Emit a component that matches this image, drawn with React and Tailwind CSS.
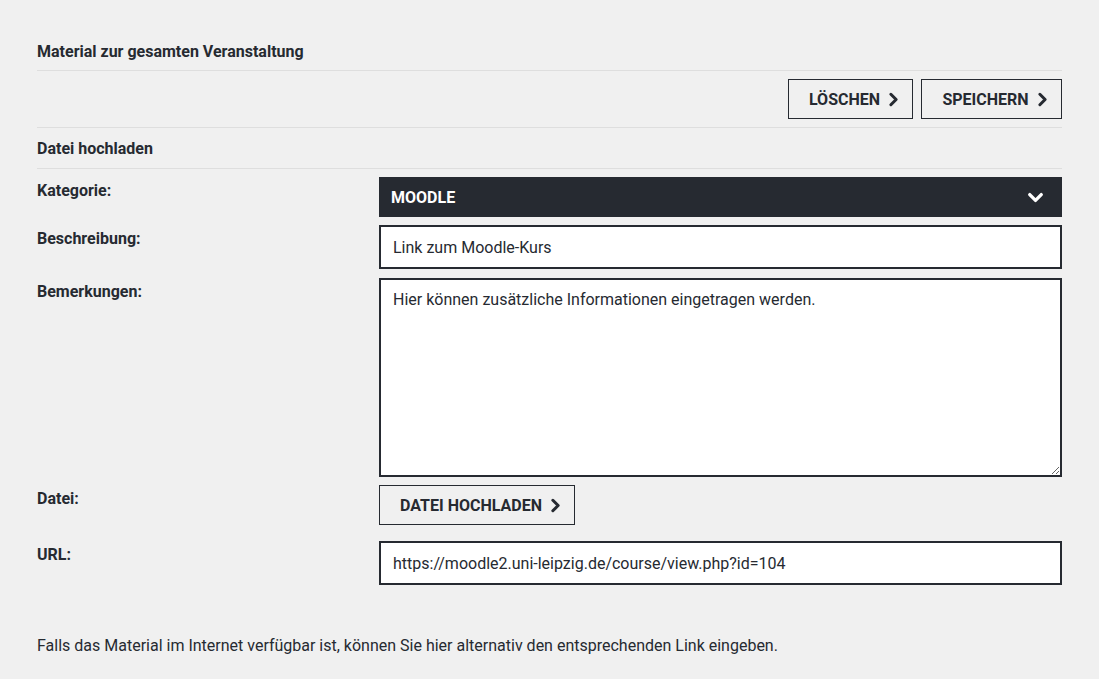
import { ChevronRight, ChevronDown } from 'lucide-react';

function ArrowButton({ children, className = '' }) {
  return (
    <button
      type="button"
      className={`flex h-10 items-center justify-center gap-[3px] border border-[#262a31] bg-transparent pl-3 pt-px text-base font-bold uppercase text-[#262a31] ${className}`}
    >
      {children}
      <ChevronRight size={21} strokeWidth={3.5} />
    </button>
  );
}

function Row({ label, children, className = '' }) {
  return (
    <div className={`grid grid-cols-[342px_1fr] ${className}`}>
      <div className="pt-1 text-base font-bold leading-5 text-[#262a31]">{label}</div>
      <div>{children}</div>
    </div>
  );
}

export default function App() {
  return (
    <div
      className="min-h-screen bg-[#f0f0f0] text-[#262a31]"
      style={{ fontFamily: 'Roboto, "Liberation Sans", sans-serif' }}
    >
      <div className="ml-[37px] w-[1025px] pt-[42px]">
        <h2 className="border-b border-[#dedede] pb-2 text-base font-bold leading-5">
          Material zur gesamten Veranstaltung
        </h2>

        <div className="flex justify-end gap-2 border-b border-[#dedede] py-2">
          <ArrowButton className="w-[125px]">Löschen</ArrowButton>
          <ArrowButton className="w-[141px]">Speichern</ArrowButton>
        </div>

        <h3 className="border-b border-[#dedede] pb-[9px] pt-[11px] text-base font-bold leading-5">
          Datei hochladen
        </h3>

        <div className="flex flex-col gap-2 pt-2">
          <Row label="Kategorie:">
            <div className="flex h-10 items-center justify-between bg-[#262a31] pl-3 pr-[15px] pt-px text-base font-bold uppercase text-white">
              <span>Moodle</span>
              <ChevronDown size={23} strokeWidth={3.5} />
            </div>
          </Row>

          <Row label="Beschreibung:">
            <input
              readOnly
              value="Link zum Moodle-Kurs"
              className="block h-11 w-full border-2 border-[#262a31] bg-white px-3 text-base text-[#262a31] outline-none"
            />
          </Row>

          <Row label="Bemerkungen:" className="mt-px">
            <textarea
              readOnly
              value="Hier können zusätzliche Informationen eingetragen werden."
              className="block h-[199px] w-full resize-y border-2 border-[#262a31] bg-white px-3 py-[10px] text-base leading-5 text-[#262a31] outline-none"
            />
          </Row>

          <Row label="Datei:">
            <ArrowButton className="w-[196px]">Datei hochladen</ArrowButton>
          </Row>

          <Row label="URL:" className="mt-2">
            <input
              readOnly
              value="https://moodle2.uni-leipzig.de/course/view.php?id=104"
              className="block h-11 w-full border-2 border-[#262a31] bg-white px-3 text-base text-[#262a31] outline-none"
            />
          </Row>
        </div>

        <p className="mt-[51px] text-base leading-5">
          Falls das Material im Internet verfügbar ist, können Sie hier alternativ den entsprechenden Link eingeben.
        </p>
      </div>
    </div>
  );
}
